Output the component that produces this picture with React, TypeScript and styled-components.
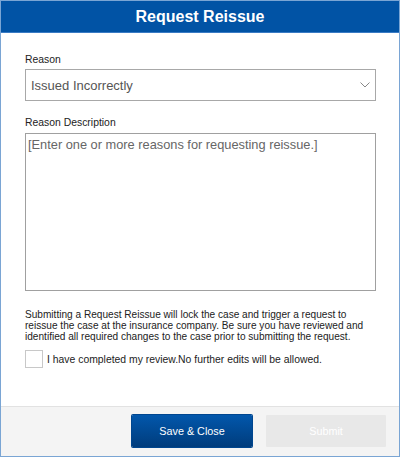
import React from "react";
import styled, { createGlobalStyle } from "styled-components";

const Global = createGlobalStyle`
  html, body { margin: 0; padding: 0; background: #ffffff; }
  * { box-sizing: border-box; }
`;

const Dialog = styled.div`
  width: 400px;
  height: 457px;
  border: 1px solid #7aa5d4;
  display: flex;
  flex-direction: column;
  font-family: "Liberation Sans", Arial, sans-serif;
  background: #ffffff;
`;

const Header = styled.div`
  height: 32px;
  background: #0153a5;
  border-bottom: 1px solid #3a7bc4;
  display: flex;
  align-items: center;
  justify-content: center;
  color: #ffffff;
  font-weight: bold;
  font-size: 16px;
`;

const Body = styled.div`
  flex: 1;
  display: flex;
  flex-direction: column;
  padding: 20px 23px 0 24px;
`;

const Label = styled.div<{ $top?: number }>`
  font-size: 10.4px;
  line-height: 14px;
  color: #222;
  margin-top: ${(p) => p.$top ?? 0}px;
`;

const Select = styled.div`
  margin-top: 2px;
  height: 32px;
  border: 1px solid #a8a8a8;
  display: flex;
  align-items: center;
  justify-content: space-between;
  padding: 0 5px 0 5px;
  font-size: 13px;
  color: #555;
`;

const TextArea = styled.div`
  margin-top: 3px;
  height: 158px;
  border: 1px solid #a0a0a0;
  padding: 3px 2px;
  font-size: 12.8px;
  line-height: 16px;
  color: #666;
`;

const Notice = styled.p`
  margin: 18px 0 0 0;
  font-size: 10.1px;
  line-height: 11px;
  color: #222;
`;

const CheckRow = styled.label`
  margin-top: 8px;
  display: flex;
  align-items: center;
  gap: 4px;
  font-size: 10.4px;
  color: #222;
`;

const Box = styled.span`
  width: 18px;
  height: 18px;
  border: 1px solid #c8c8c8;
  background: #fff;
`;

const Footer = styled.div`
  height: 50px;
  border-top: 1px solid #e2e2e2;
  background: #f4f4f4;
  display: flex;
  justify-content: flex-end;
  align-items: flex-start;
  padding: 8px 13px 0 0;
  gap: 14px;
`;

const Button = styled.button<{ $primary?: boolean }>`
  width: 120px;
  height: 32px;
  border: none;
  font-family: "Liberation Sans", Arial, sans-serif;
  font-size: 10.8px;
  padding: 0;
  border-radius: 1px;
  color: #ffffff;
  background: ${(p) => (p.$primary ? "linear-gradient(#0257ac, #003c7c)" : "#e8e8e8")};
  box-shadow: ${(p) => (p.$primary ? "0 0 0 1px #00468f" : "none")};
`;

export default function App() {
  return (
    <>
      <Global />
      <Dialog>
        <Header>Request Reissue</Header>
        <Body>
          <Label>Reason</Label>
          <Select>
            <span>Issued Incorrectly</span>
            <svg width="10" height="6" viewBox="0 0 10 6">
              <path d="M0.5 0.5 L5 5 L9.5 0.5" fill="none" stroke="#888" strokeWidth="1" />
            </svg>
          </Select>
          <Label $top={15}>Reason Description</Label>
          <TextArea>[Enter one or more reasons for requesting reissue.]</TextArea>
          <Notice>
            Submitting a Request Reissue will lock the case and trigger a request to reissue the case at the
            insurance company. Be sure you have reviewed and identified all required changes to the case prior to
            submitting the request.
          </Notice>
          <CheckRow>
            <Box />
            I have completed my review.No further edits will be allowed.
          </CheckRow>
        </Body>
        <Footer>
          <Button $primary>Save &amp; Close</Button>
          <Button>Submit</Button>
        </Footer>
      </Dialog>
    </>
  );
}
